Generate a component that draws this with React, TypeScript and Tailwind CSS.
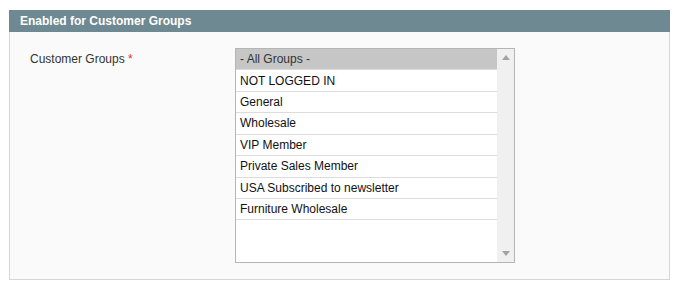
const groups = [
  '- All Groups -',
  'NOT LOGGED IN',
  'General',
  'Wholesale',
  'VIP Member',
  'Private Sales Member',
  'USA Subscribed to newsletter',
  'Furniture Wholesale',
];

export default function App() {
  return (
    <div className="w-[680px] h-[290px] bg-white pt-[10px] pl-[9px] font-['Liberation_Sans',Arial,sans-serif]">
      <div className="w-[661px]">
        <div className="h-[22px] bg-[#6f8992] pl-[11px] flex items-center text-[12px] font-bold text-white">
          Enabled for Customer Groups
        </div>
        <div className="h-[248px] bg-[#fafafa] border border-t-0 border-[#d6d6d6] flex pt-[16px]">
          <div className="w-[225px] pl-[20px] pt-[2px] text-[12px] text-[#333]">
            Customer Groups <span className="text-[#eb340a]">*</span>
          </div>
          <div className="w-[280px] h-[215px] border border-[#b5b5b5] bg-white flex">
            <div className="flex-1">
              {groups.map((g, i) => (
                <div key={g}
                  className={`h-[21.43px] pl-[4px] flex items-center text-[12px] border-b border-[#dcdcdc] ${i === 0 ? 'bg-[#c6c6c6] text-[#333]' : 'text-[#111]'}`}>
                  {g}
                </div>
              ))}
            </div>
            <div className="w-[17px] bg-[#f0f0f0] flex flex-col justify-between items-center py-[6px]">
              <svg width="8" height="5" viewBox="0 0 8 5"><path d="M4 0 L8 5 L0 5 Z" fill="#a3a3a3" /></svg>
              <svg width="8" height="5" viewBox="0 0 8 5"><path d="M0 0 L8 0 L4 5 Z" fill="#a3a3a3" /></svg>
            </div>
          </div>
        </div>
      </div>
    </div>
  );
}
